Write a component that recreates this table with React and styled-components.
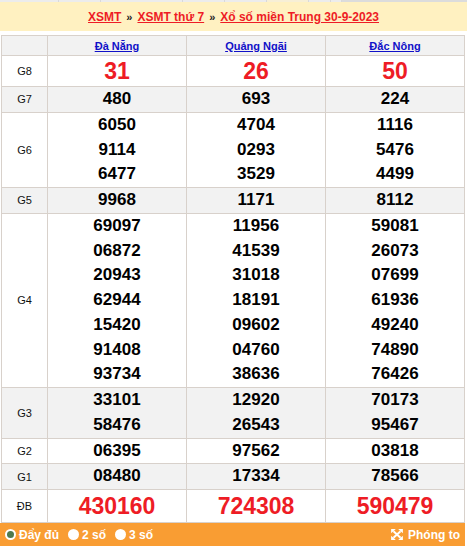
import React from 'react'
import styled, { createGlobalStyle } from 'styled-components'

const GlobalStyle = createGlobalStyle`
  html, body {
    margin: 0;
    padding: 0;
    background: #ffffff;
    font-family: "Liberation Sans", Arial, sans-serif;
  }
`

const Page = styled.div`
  width: 467px;
  height: 546px;
  overflow: hidden;
  background: #ffffff;
`

const TabStrip = styled.div`
  display: flex;
  height: 2px;
`
const TabPiece = styled.div`
  flex: 0 0 ${p => p.w}px;
  background: ${p => p.bg || '#ececec'};
  border-right: 1px solid #d9d9d9;
`

const TitleBar = styled.div`
  height: 29px;
  background: #fff1c1;
  display: flex;
  align-items: center;
  justify-content: center;
  font-size: 12px;
  font-weight: bold;
  color: #333;
  margin-bottom: 4px;
`
const Crumb = styled.a`
  color: #ee1c25;
  text-decoration: underline;
  padding: 0 1px;
`
const Sep = styled.span`
  color: #222;
  margin: 0 4px;
  font-size: 11px;
`

const Table = styled.table`
  margin-left: 1px;
  width: 464px;
  border-collapse: collapse;
  table-layout: fixed;
`
const HeadRow = styled.tr`
  background: #f2f2f2;
  height: 20px;
`
const HeadCell = styled.th`
  border: 1px solid #d8d1cb;
  font-size: 11px;
  font-weight: bold;
  padding: 0;
  a {
    color: #1010c8;
    text-decoration: underline;
  }
`
const Row = styled.tr`
  background: ${p => (p.$alt ? '#f2f2f2' : '#ffffff')};
`
const Label = styled.td`
  border: 1px solid #d8d1cb;
  font-size: 11px;
  color: #111;
  text-align: center;
  padding: 0;
`
const Cell = styled.td`
  border: 1px solid #d8d1cb;
  text-align: center;
  padding: 0;
  vertical-align: middle;
`
const Num = styled.div`
  font-size: ${p => (p.$big ? '23px' : '17px')};
  line-height: ${p => (p.$big ? (p.$db ? '32px' : '30px') : '24.75px')};
  font-weight: bold;
  color: ${p => (p.$big ? '#ee1c25' : '#000')};
`

const Footer = styled.div`
  height: 23px;
  width: 465px;
  background: #f99d33;
  display: flex;
  align-items: center;
  padding: 0 5px 0 5px;
  box-sizing: border-box;
  color: #ffffff;
  font-size: 12px;
  font-weight: bold;
`
const Option = styled.label`
  display: flex;
  align-items: center;
  gap: 3px;
  margin-right: 9px;
`
const Radio = styled.span`
  width: 11px;
  height: 11px;
  border-radius: 50%;
  background: #ffffff;
  box-sizing: border-box;
  display: flex;
  align-items: center;
  justify-content: center;
  &::after {
    content: '';
    width: 7px;
    height: 7px;
    border-radius: 50%;
    background: ${p => (p.$on ? '#4e7a4f' : 'transparent')};
  }
`
const Zoom = styled.div`
  margin-left: auto;
  display: flex;
  align-items: center;
  gap: 5px;
`

const ExpandIcon = () => (
  <svg width="12" height="11" viewBox="0 0 15 14">
    <g stroke="#fff" strokeWidth="2.6">
      <line x1="3" y1="3" x2="12" y2="11" />
      <line x1="12" y1="3" x2="3" y2="11" />
    </g>
    <g fill="#fff">
      <polygon points="0,0 6,0 0,5.5" />
      <polygon points="15,0 9,0 15,5.5" />
      <polygon points="0,14 6,14 0,8.5" />
      <polygon points="15,14 9,14 15,8.5" />
    </g>
  </svg>
)

const provinces = ['Đà Nẵng', 'Quảng Ngãi', 'Đắc Nông']

const rows = [
  { label: 'G8', big: true, vals: [['31'], ['26'], ['50']] },
  { label: 'G7', vals: [['480'], ['693'], ['224']] },
  {
    label: 'G6',
    vals: [
      ['6050', '9114', '6477'],
      ['4704', '0293', '3529'],
      ['1116', '5476', '4499'],
    ],
  },
  { label: 'G5', vals: [['9968'], ['1171'], ['8112']] },
  {
    label: 'G4',
    vals: [
      ['69097', '06872', '20943', '62944', '15420', '91408', '93734'],
      ['11956', '41539', '31018', '18191', '09602', '04760', '38636'],
      ['59081', '26073', '07699', '61936', '49240', '74890', '76426'],
    ],
  },
  {
    label: 'G3',
    vals: [
      ['33101', '58476'],
      ['12920', '26543'],
      ['70173', '95467'],
    ],
  },
  { label: 'G2', vals: [['06395'], ['97562'], ['03818']] },
  { label: 'G1', vals: [['08480'], ['17334'], ['78566']] },
  { label: 'ĐB', big: true, db: true, vals: [['430160'], ['724308'], ['590479']] },
]

const tabs = [
  [58], [41], [81], [41], [41], [41, '#f7efd6'], [21], [10], [129, '#dcdcdc'],
]

export default function App() {
  return (
    <Page>
      <GlobalStyle />
      <TabStrip>
        {tabs.map(([w, bg], i) => (
          <TabPiece key={i} w={w} bg={bg} />
        ))}
      </TabStrip>
      <TitleBar>
        <Crumb>XSMT</Crumb>
        <Sep>»</Sep>
        <Crumb>XSMT thứ 7</Crumb>
        <Sep>»</Sep>
        <Crumb>Xổ số miền Trung 30-9-2023</Crumb>
      </TitleBar>
      <Table>
        <colgroup>
          <col style={{ width: 46 }} />
          <col />
          <col />
          <col />
        </colgroup>
        <thead>
          <HeadRow>
            <HeadCell />
            {provinces.map(p => (
              <HeadCell key={p}>
                <a>{p}</a>
              </HeadCell>
            ))}
          </HeadRow>
        </thead>
        <tbody>
          {rows.map((r, i) => (
            <Row key={r.label} $alt={i % 2 === 1}>
              <Label>{r.label}</Label>
              {r.vals.map((col, j) => (
                <Cell key={j}>
                  {col.map((n, k) => (
                    <Num key={k} $big={r.big} $db={r.db}>
                      {n}
                    </Num>
                  ))}
                </Cell>
              ))}
            </Row>
          ))}
        </tbody>
      </Table>
      <Footer>
        <Option>
          <Radio $on />
          Đẩy đủ
        </Option>
        <Option>
          <Radio />2 số
        </Option>
        <Option>
          <Radio />3 số
        </Option>
        <Zoom>
          <ExpandIcon />
          Phóng to
        </Zoom>
      </Footer>
    </Page>
  )
}
